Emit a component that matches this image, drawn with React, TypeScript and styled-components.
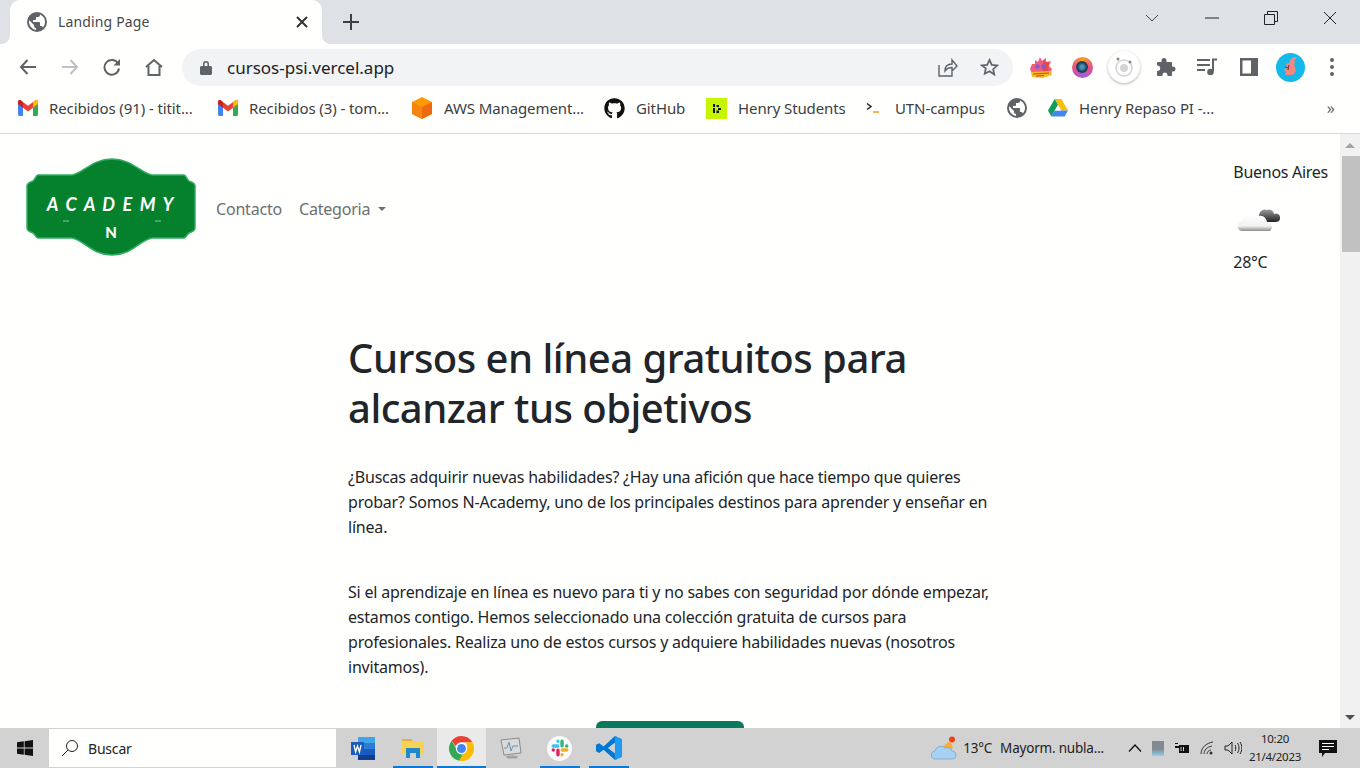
import { ReactNode } from "react";
import styled, { createGlobalStyle } from "styled-components";
import { FaGithub } from "react-icons/fa";

const GlobalStyle = createGlobalStyle`
  html, body {
    margin: 0;
    padding: 0;
    height: 100%;
    overflow: hidden;
  }
  body {
    font-family: "Noto Sans", "Open Sans", sans-serif;
    color: #212529;
  }
  * {
    box-sizing: border-box;
  }
`;

const GlobeIcon = ({ size = 20 }: { size?: number }) => (
  <svg width={size} height={size} viewBox="2 2 20 20">
    <path
      fill="#5f6368"
      fillRule="evenodd"
      d="M12 2a10 10 0 1 0 0 20 10 10 0 0 0 0-20zm-1 17.900A8 8 0 0 1 4.200 10.200L9 15v1c0 1.100.9 2 2 2zm6.900-2.500A2 2 0 0 0 16 16h-1v-3c0-.6-.4-1-1-1H8v-2h2c.6 0 1-.4 1-1V7h2c1.100 0 2-.9 2-2v-.4a8 8 0 0 1 2.900 12.800z"
    />
  </svg>
);

const GmailIcon = () => (
  <svg width="20" height="16" viewBox="0 0 20 16">
    <path fill="#4285f4" d="M0 3v11.500C0 15.300.7 16 1.500 16H5V7z" />
    <path fill="#34a853" d="M15 7v9h3.500c.8 0 1.500-.7 1.500-1.500V3z" />
    <path fill="#ea4335" d="M0 1.800V4l5 3.800 5 3.700 5-3.700L20 4V1.800C20 .3 18.300-.5 17.100.4L10 5.700 2.900.4C1.700-.5 0 .3 0 1.800z" />
    <path fill="#c5221f" d="M0 4l5 3.800V2.200L2.900.4C1.700-.5 0 .3 0 1.800z" />
    <path fill="#fbbc04" d="M15 2.200v5.600L20 4V1.800C20 .3 18.300-.5 17.100.4z" />
  </svg>
);

const AwsCube = () => (
  <svg width="22" height="22" viewBox="0 0 22 22">
    <path fill="#ff9900" d="M11 0l10 5v12l-10 5-10-5V5z" />
    <path fill="#f58410" d="M11 10L1 5v12l10 5z" />
    <path fill="#ee6a12" d="M11 10l10-5v12l-10 5z" />
  </svg>
);

const HenryIcon = () => (
  <HenrySquare>
    <svg width="8" height="9" viewBox="0 0 8 9">
      <path fill="#111" d="M0 0h2v3H0zM0 4h2v5H0zM3.500 1H6v2H3.500zM5 4h3v2H5zM3.500 6.500H6V9H3.500z" />
    </svg>
  </HenrySquare>
);

const TerminalIcon = () => (
  <svg width="18" height="12" viewBox="0 0 18 12">
    <path fill="none" stroke="#222" strokeWidth="1.500" d="M1 1.500L5 4.500 1 7.500" />
    <path fill="none" stroke="#f09a1a" strokeWidth="1.500" d="M7 10h6" />
  </svg>
);

const DriveIcon = () => (
  <svg width="20" height="18" viewBox="0 0 20 18">
    <path fill="#fbbc04" d="M6.700 0h6.600L20 11.600h-6.700z" />
    <path fill="#0f9d58" d="M6.700 0L10 5.800 3.300 17.400 0 11.600z" />
    <path fill="#4285f4" d="M6.700 11.600H20l-3.300 5.800H3.300z" />
    <path fill="#fffffd" d="M10 6.200l2.700 5.400H7.200z" />
  </svg>
);

const ChromeIcon = () => (
  <svg width="25" height="25" viewBox="0 0 24 24">
    <path fill="#ea4335" d="M12 0a12 12 0 0 1 10.400 6H12a6 6 0 0 0-5.600 3.800L2.600 4.500A12 12 0 0 1 12 0z" />
    <path fill="#34a853" d="M2.600 4.500l5.200 9.200a5 5 0 0 0 5.700 4.100L9.800 23.800A12 12 0 0 1 2.600 4.500z" />
    <path fill="#fbbc04" d="M22.400 6a12 12 0 0 1-12.600 17.800l5.200-9A6 6 0 0 0 16 6z" />
    <circle cx="12" cy="12" r="5.400" fill="#fff" />
    <circle cx="12" cy="12" r="4.300" fill="#4285f4" />
  </svg>
);

const WordIcon = () => (
  <svg width="25" height="25" viewBox="0 0 25 25">
    <path fill="#41a5ee" d="M7 1h17v6H7z" />
    <path fill="#2b7cd3" d="M7 7h17v6H7z" />
    <path fill="#185abd" d="M7 13h17v6H7z" />
    <path fill="#103f91" d="M7 19h17v5H7z" />
    <rect x="0" y="6" width="13" height="13" fill="#1a5dbd" />
    <path fill="none" stroke="#fff" strokeWidth="1.300" d="M3 9l1.600 7 1.900-6 1.900 6L10 9" />
  </svg>
);

const FolderIcon = () => (
  <svg width="24" height="22" viewBox="0 0 24 22">
    <path fill="#e2b33f" d="M1 2h9l2 2h-11z" />
    <path fill="#f8d254" d="M1 4h22v13H1z" />
    <path fill="#1f8ac9" d="M5 11h14v10h-4v-5H9v5H5z" />
  </svg>
);

const MonitorIcon = () => (
  <svg width="24" height="24" viewBox="0 0 24 24">
    <path fill="#d9dadb" stroke="#8c8c8c" d="M2 4l18-2 2 15-17 2z" />
    <path fill="none" stroke="#6b93b5" d="M5 12l3 0 2-6 2 9 2-5 5 0" />
    <ellipse cx="13" cy="21" rx="6" ry="1.600" fill="#a2a2a2" />
  </svg>
);

const SlackIcon = () => (
  <SlackDisc>
    <svg width="18" height="18" viewBox="0 0 16 16">
      <path fill="none" stroke="#36c5f0" strokeWidth="3" strokeLinecap="round" d="M2 6.200h4M6.200 2v.1" />
      <path fill="none" stroke="#2eb67d" strokeWidth="3" strokeLinecap="round" d="M9.800 2v4M14 6.200h-.1" />
      <path fill="none" stroke="#ecb22e" strokeWidth="3" strokeLinecap="round" d="M14 9.800h-4M9.800 14v-.1" />
      <path fill="none" stroke="#e01e5a" strokeWidth="3" strokeLinecap="round" d="M6.200 14v-4M2 9.800h.1" />
    </svg>
  </SlackDisc>
);

const VsCodeIcon = () => (
  <svg width="26" height="26" viewBox="0 0 24 24">
    <path fill="#0078d4" d="M17.500 1L24 4v16l-6.500 3L7 13.500l-4 3-3-1.500v-6L3 7.500l4 3zM17.500 7L11 12l6.500 5z" />
    <path fill="#1f9cf0" d="M17.500 1L24 4v16l-6.500 3z" />
  </svg>
);

const WindowsIcon = () => (
  <svg width="16" height="16" viewBox="0 0 16 16">
    <path fill="#111" d="M0 2.300l6.800-1v6.300H0zM7.600 1.200L16 0v7.600H7.600zM0 8.400h6.800v6.300l-6.800-1zM7.600 8.400H16V16l-8.400-1.200z" />
  </svg>
);

const WeatherCloud = () => (
  <svg width="44" height="30" viewBox="0 0 44 30">
    <defs>
      <linearGradient id="lightCloud" x1="0" y1="0" x2="0" y2="1">
        <stop offset="0" stopColor="#ffffff" />
        <stop offset=".7" stopColor="#f2f2f2" />
        <stop offset="1" stopColor="#8d8d8d" />
      </linearGradient>
      <linearGradient id="darkCloud" x1="0" y1="0" x2="0" y2="1">
        <stop offset="0" stopColor="#9a9a9a" />
        <stop offset="1" stopColor="#222" />
      </linearGradient>
    </defs>
    <path fill="url(#darkCloud)" d="M21 10a6 6 0 0 1 8-5 5 5 0 0 1 7 4 4 4 0 0 1 6 4c0 3-2 4-5 4H24c-3 0-5-3-3-7z" />
    <path fill="url(#lightCloud)" d="M5 26a5 5 0 0 1-1-10 8 8 0 0 1 14-4 7 7 0 0 1 11 5 5 5 0 0 1 3 9z" />
  </svg>
);

const TaskbarWeatherIcon = () => (
  <svg width="26" height="24" viewBox="0 0 26 24">
    <circle cx="21" cy="3.500" r="3" fill="#f0420f" />
    <path fill="#f6ad3c" d="M10 12l9-7 3 6-2 3z" />
    <path fill="#a9d0ee" stroke="#7fb2dc" d="M5 23a4 4 0 0 1-1-8 6 6 0 0 1 10-3 5 5 0 0 1 7 3 4 4 0 0 1 0 8z" />
  </svg>
);

const Logo = () => (
  <LogoSvg width="170" height="98" viewBox="0 0 170 98">
    <path
      fill="#05812e"
      stroke="#2fae63"
      strokeWidth="1.500"
      d="M46 17C58 15 66 1 86 1s28 14 40 16h32c2 0 3 5 5 6 3 1 6 2 6 5v42c0 3-3 4-6 5-2 1-3 5-5 5h-32c-12 2-20 17-40 17s-28-15-40-17H12c-2 0-3-4-5-5-3-1-6-2-6-5V28c0-3 3-4 6-5 2-1 3-6 5-6z"
    />
    <path fill="none" stroke="#7fcf9c" strokeWidth="1" d="M37 63h6M129 63h6" />
    <LogoWord x="85" y="53" textAnchor="middle">A C A D E M Y</LogoWord>
    <LogoLetter x="85" y="80" textAnchor="middle">N</LogoLetter>
  </LogoSvg>
);

interface BookmarkData {
  icon: ReactNode;
  label?: string;
  width: number;
}

const bookmarks: BookmarkData[] = [
  { icon: <GmailIcon />, label: "Recibidos (91) - titit...", width: 148 },
  { icon: <GmailIcon />, label: "Recibidos (3) - tom...", width: 141 },
  { icon: <AwsCube />, label: "AWS Management...", width: 139 },
  { icon: <FaGithub size={21} color="#111" />, label: "GitHub", width: 49 },
  { icon: <HenryIcon />, label: "Henry Students", width: 107 },
  { icon: <TerminalIcon />, label: "UTN-campus", width: 91 },
  { icon: <GlobeIcon />, width: 0 },
  { icon: <DriveIcon />, label: "Henry Repaso PI -...", width: 136 },
];

const App = () => {
  return (
    <>
      <GlobalStyle />
      <Screen>
        <TabStrip>
          <Tab>
            <GlobeIcon />
            <TabTitle>Landing Page</TabTitle>
            <svg width="12" height="12" viewBox="0 0 12 12">
              <path stroke="#333" strokeWidth="2" d="M1 1l10 10M11 1L1 11" />
            </svg>
          </Tab>
          <NewTab>
            <svg width="16" height="16" viewBox="0 0 16 16">
              <path stroke="#3c4043" strokeWidth="2" d="M8 0v16M0 8h16" />
            </svg>
          </NewTab>
          <WindowButtons>
            <WindowButton $width={60}>
              <svg width="14" height="8" viewBox="0 0 14 8">
                <path fill="none" stroke="#444" d="M1 1l6 6 6-6" />
              </svg>
            </WindowButton>
            <WindowButton $width={60}>
              <svg width="14" height="2" viewBox="0 0 14 2">
                <path stroke="#222" d="M0 1h14" />
              </svg>
            </WindowButton>
            <WindowButton $width={58}>
              <svg width="14" height="14" viewBox="0 0 14 14">
                <path fill="none" stroke="#222" d="M.5 3.500h10v10H.5zM3.500 3.500V.5h10v10h-3" />
              </svg>
            </WindowButton>
            <WindowButton $width={60}>
              <svg width="14" height="14" viewBox="0 0 14 14">
                <path stroke="#222" d="M1 1l12 12M13 1L1 13" />
              </svg>
            </WindowButton>
          </WindowButtons>
        </TabStrip>

        <Toolbar>
          <NavButtons>
            <svg width="18" height="16" viewBox="0 0 18 16">
              <path fill="none" stroke="#5f6368" strokeWidth="2" d="M17 8H2M8.500 1L2 8l6.500 7" />
            </svg>
            <svg width="18" height="16" viewBox="0 0 18 16">
              <path fill="none" stroke="#bdc1c6" strokeWidth="2" d="M1 8h15M9.500 1L16 8l-6.500 7" />
            </svg>
            <svg width="18" height="18" viewBox="0 0 18 18">
              <path fill="none" stroke="#5f6368" strokeWidth="2" d="M15.300 6A7.300 7.300 0 1 0 16 10.500" />
              <path fill="#5f6368" d="M17 1v6.500h-6.500z" />
            </svg>
            <svg width="18" height="18" viewBox="0 0 18 18">
              <path fill="none" stroke="#5f6368" strokeWidth="2" d="M1 9l8-7 8 7M3.500 8v9h11V8" />
            </svg>
          </NavButtons>
          <Omnibox>
            <svg width="12" height="15" viewBox="0 0 12 15">
              <path fill="#5f6368" d="M1.500 6H3V4a3 3 0 0 1 6 0v2h1.500c.8 0 1.500.7 1.500 1.500v6c0 .8-.7 1.500-1.500 1.500h-9C.7 15 0 14.300 0 13.500v-6C0 6.700.7 6 1.500 6zM4.500 6h3V4a1.500 1.500 0 0 0-3 0z" />
            </svg>
            <Url>cursos-psi.vercel.app</Url>
            <OmniboxActions>
              <svg width="20" height="19" viewBox="0 0 20 19">
                <path fill="none" stroke="#5f6368" strokeWidth="1.400" d="M1 7v11h13v-4M7 13c0-5 3-7 7-7V2l5 6-5 5V9.500c-3 0-5 1-7 3.500z" />
              </svg>
              <svg width="19" height="18" viewBox="0 0 24 23">
                <path fill="none" stroke="#5f6368" strokeWidth="2.200" d="M12 2.500l2.900 6.300 6.900.8-5.100 4.700 1.400 6.800L12 17l-6.100 3.100 1.400-6.800L2.200 9.600l6.900-.8z" />
              </svg>
            </OmniboxActions>
          </Omnibox>
          <Extensions>
            <ExtensionSlot>
              <svg width="24" height="24" viewBox="0 0 24 24">
                <path fill="#ef5a7e" d="M3 9l3 0 0-4 3 2 2-5 2 4 4-3 0 4 5-1-2 5 3 3-2 4H3l-2-4z" />
                <path fill="#e8431f" d="M14 5l6 3-1 8h-5z" opacity=".7" />
                <circle cx="8.500" cy="11.500" r="2.200" fill="#7a5fd6" />
                <circle cx="14.500" cy="11.500" r="2.200" fill="#7a5fd6" />
                <path fill="#f5bd23" d="M2 17l20-1 1 4-9 3-11-1z" />
                <path stroke="#e6342a" strokeWidth="1" d="M4 19l16-1M7 21l8-.5" />
              </svg>
            </ExtensionSlot>
            <ExtensionSlot>
              <LensRing>
                <LensCore />
              </LensRing>
            </ExtensionSlot>
            <ExtensionSlot>
              <RadarDisc>
                <svg width="24" height="24" viewBox="0 0 24 24">
                  <circle cx="12" cy="13" r="8" fill="none" stroke="#d4d4d4" strokeWidth="1.500" />
                  <circle cx="12" cy="13" r="4" fill="#d4d4d4" />
                  <circle cx="6" cy="4" r="1.500" fill="#888" />
                  <circle cx="18" cy="7" r="1.500" fill="#888" />
                </svg>
              </RadarDisc>
            </ExtensionSlot>
            <ExtensionSlot>
              <svg width="20" height="20" viewBox="0 0 20 20">
                <path fill="#5f6368" d="M8 1a2.500 2.500 0 0 1 2.500 2.500V5H15a1 1 0 0 1 1 1v3.500h1a2.500 2.500 0 0 1 0 5h-1V18a1 1 0 0 1-1 1h-3.500v-1a2.500 2.500 0 0 0-5 0v1H2a1 1 0 0 1-1-1v-4h1a2.800 2.800 0 0 0 0-5.500H1V6a1 1 0 0 1 1-1h3.500V3.500A2.500 2.500 0 0 1 8 1z" />
              </svg>
            </ExtensionSlot>
            <ExtensionSlot>
              <svg width="20" height="18" viewBox="0 0 20 18">
                <path stroke="#5f6368" strokeWidth="2" fill="none" d="M0 2h13M0 7h13M0 12h8M16 13V1.500h4" />
                <circle cx="13.500" cy="14" r="3.300" fill="#5f6368" />
              </svg>
            </ExtensionSlot>
            <ExtensionSlot>
              <svg width="18" height="18" viewBox="0 0 18 18">
                <path fill="#5f6368" d="M0 0h18v18H0zM2.500 2.500v13H11v-13z" fillRule="evenodd" />
              </svg>
            </ExtensionSlot>
            <ExtensionSlot>
              <Avatar>
                <svg width="16" height="22" viewBox="0 0 16 22">
                  <path fill="#f08a80" d="M12 1l3 .5-3 3.500 1 2c-1 1-1 2 0 4 1.500 4 0 8-4 8H3l1-3-2-2 3-3-1-3 3-1 2-4z" />
                  <path stroke="#a82a2a" strokeWidth="1.200" d="M3 11l4 1M6 14l1-5" />
                </svg>
              </Avatar>
            </ExtensionSlot>
            <ExtensionSlot>
              <MenuDots>
                <i />
                <i />
                <i />
              </MenuDots>
            </ExtensionSlot>
          </Extensions>
        </Toolbar>

        <BookmarkBar>
          <BookmarkList>
            {bookmarks.map((bookmark, index) => (
              <Bookmark key={index}>
                {bookmark.icon}
                {bookmark.label && <BookmarkLabel $width={bookmark.width}>{bookmark.label}</BookmarkLabel>}
              </Bookmark>
            ))}
          </BookmarkList>
          <MoreBookmarks>»</MoreBookmarks>
        </BookmarkBar>

        <Viewport>
          <Page>
            <NavBar>
              <NavLeft>
                <Logo />
                <NavLink>Contacto</NavLink>
                <NavLink>
                  Categoria
                  <Caret />
                </NavLink>
              </NavLeft>
              <Weather>
                <City>Buenos Aires</City>
                <CloudSlot>
                  <WeatherCloud />
                </CloudSlot>
                <City>28°C</City>
              </Weather>
            </NavBar>
            <Hero>
              <Title>Cursos en línea gratuitos para alcanzar tus objetivos</Title>
              <Paragraph>
                ¿Buscas adquirir nuevas habilidades? ¿Hay una afición que hace tiempo que quieres probar? Somos
                N-Academy, uno de los principales destinos para aprender y enseñar en línea.
              </Paragraph>
              <Paragraph>
                Si el aprendizaje en línea es nuevo para ti y no sabes con seguridad por dónde empezar, estamos
                contigo. Hemos seleccionado una colección gratuita de cursos para profesionales. Realiza uno de estos
                cursos y adquiere habilidades nuevas (nosotros invitamos).
              </Paragraph>
              <CtaRow>
                <Cta />
              </CtaRow>
            </Hero>
          </Page>
          <Scrollbar>
            <ScrollArrow $up />
            <ScrollThumb />
            <ScrollTrack />
            <ScrollArrow />
          </Scrollbar>
        </Viewport>

        <Taskbar>
          <StartButton>
            <WindowsIcon />
          </StartButton>
          <SearchBox>
            <svg width="18" height="18" viewBox="0 0 18 18">
              <circle cx="11" cy="7" r="5.500" fill="none" stroke="#222" />
              <path stroke="#222" d="M7 11l-6 6" />
            </svg>
            <SearchText>Buscar</SearchText>
          </SearchBox>
          <TaskIcons>
            <TaskIcon>
              <WordIcon />
            </TaskIcon>
            <TaskIcon $open>
              <FolderIcon />
            </TaskIcon>
            <TaskIcon $open $active>
              <ChromeIcon />
            </TaskIcon>
            <TaskIcon>
              <MonitorIcon />
            </TaskIcon>
            <TaskIcon $open>
              <SlackIcon />
            </TaskIcon>
            <TaskIcon $open>
              <VsCodeIcon />
            </TaskIcon>
          </TaskIcons>
          <Tray>
            <TaskbarWeatherIcon />
            <TrayWeather>13°C</TrayWeather>
            <TrayForecast>Mayorm. nubla...</TrayForecast>
            <TrayIcons>
              <svg width="14" height="8" viewBox="0 0 14 8">
                <path fill="none" stroke="#111" strokeWidth="1.300" d="M1 7.500l6-6.500 6 6.500" />
              </svg>
              <TrayApp />
              <svg width="16" height="12" viewBox="0 0 16 12">
                <path fill="#111" d="M5 3h10v8H5zM1 1h3v1H1zM1 4h4v2H1z" />
                <path stroke="#d2d2d2" d="M7 5v4M9.500 5v4" />
              </svg>
              <svg width="14" height="14" viewBox="0 0 14 14">
                <path fill="none" stroke="#333" d="M1 13C1 7 6 2 13 1M4 13c0-4 3-7 8-8M7 13c0-2 2-4 4-4" />
                <circle cx="11" cy="12" r="1.500" fill="#333" />
              </svg>
              <svg width="18" height="14" viewBox="0 0 18 14">
                <path fill="none" stroke="#222" d="M1 5h3l4-4v12l-4-4H1zM11 4c1 2 1 4 0 6M13.500 2c2 3 2 7 0 10M16 1c2.500 4 2.500 8 0 12" />
              </svg>
            </TrayIcons>
            <Clock>
              <span>10:20</span>
              <span>21/4/2023</span>
            </Clock>
            <Notifications>
              <svg width="18" height="17" viewBox="0 0 18 17">
                <path fill="#111" d="M0 0h18v13H6l-3 4v-4H0z" />
                <path stroke="#fff" d="M3 3.500h12M3 6.500h12M3 9.500h7" />
              </svg>
            </Notifications>
          </Tray>
        </Taskbar>
      </Screen>
    </>
  );
};

export default App;

const Screen = styled.div`
  display: flex;
  flex-direction: column;
  width: 1360px;
  height: 768px;
  overflow: hidden;
  background: #fffffd;
`;

const TabStrip = styled.div`
  display: flex;
  align-items: flex-end;
  flex: 0 0 44px;
  padding-left: 10px;
  background: #dee1e6;
`;

const Tab = styled.div`
  position: relative;
  display: flex;
  align-items: center;
  width: 312px;
  height: 44px;
  padding: 0 14px 0 17px;
  background: #fffffd;
  border-radius: 10px 10px 0 0;
  svg:last-child {
    margin-left: auto;
  }
  &::before,
  &::after {
    content: "";
    position: absolute;
    bottom: 0;
    width: 8px;
    height: 8px;
  }
  &::before {
    left: -8px;
    background: radial-gradient(circle at 0 0, #dee1e6 7.500px, #fffffd 8px);
  }
  &::after {
    right: -8px;
    background: radial-gradient(circle at 100% 0, #dee1e6 7.500px, #fffffd 8px);
  }
`;

const TabTitle = styled.span`
  margin: -2px 0 0 11px;
  font-size: 14px;
  letter-spacing: 0.15px;
  color: #45484c;
`;

const NewTab = styled.div`
  display: flex;
  align-items: center;
  height: 44px;
  margin-left: 21px;
`;

const WindowButtons = styled.div`
  display: flex;
  align-self: flex-start;
  height: 36px;
  margin-left: auto;
`;

const WindowButton = styled.div<{ $width: number }>`
  display: flex;
  align-items: center;
  justify-content: center;
  width: ${({ $width }) => $width}px;
`;

const Toolbar = styled.div`
  display: flex;
  align-items: center;
  flex: 0 0 46px;
  padding-left: 19px;
  background: #fffffd;
`;

const NavButtons = styled.div`
  display: flex;
  align-items: center;
  gap: 24px;
  width: 163px;
`;

const Omnibox = styled.div`
  display: flex;
  align-items: center;
  width: 831px;
  height: 37px;
  padding: 0 14px 0 18px;
  background: #f1f3f4;
  border-radius: 19px;
`;

const Url = styled.span`
  margin-left: 15px;
  font-size: 17px;
  color: #202124;
`;

const OmniboxActions = styled.div`
  display: flex;
  align-items: center;
  gap: 22px;
  margin-left: auto;
`;

const Extensions = styled.div`
  display: flex;
  align-items: center;
  margin-left: 7px;
`;

const ExtensionSlot = styled.div`
  display: flex;
  align-items: center;
  justify-content: center;
  width: 41.600px;
  height: 40px;
`;

const LensRing = styled.div`
  display: flex;
  align-items: center;
  justify-content: center;
  width: 21px;
  height: 21px;
  border-radius: 50%;
  background: conic-gradient(#f5a02c, #e94d8b, #a05fd6, #e94d8b, #f5a02c);
`;

const LensCore = styled.div`
  width: 12px;
  height: 12px;
  border-radius: 50%;
  background: radial-gradient(circle, #4a90b8 20%, #1f3f57 55%);
`;

const RadarDisc = styled.div`
  display: flex;
  align-items: center;
  justify-content: center;
  width: 32px;
  height: 32px;
  border-radius: 50%;
  background: #fff;
  box-shadow: 0 1px 3px rgba(0, 0, 0, 0.3);
`;

const Avatar = styled.div`
  display: flex;
  align-items: center;
  justify-content: center;
  width: 29px;
  height: 29px;
  border-radius: 50%;
  background: #14b9ea;
`;

const MenuDots = styled.div`
  display: flex;
  flex-direction: column;
  gap: 3px;
  i {
    display: block;
    width: 4px;
    height: 4px;
    border-radius: 50%;
    background: #5f6368;
  }
`;

const BookmarkBar = styled.div`
  display: flex;
  align-items: center;
  flex: 0 0 44px;
  padding: 0 25px 7px 18px;
  background: #fffffd;
  border-bottom: 1px solid #d6d8d9;
`;

const BookmarkList = styled.div`
  display: flex;
  align-items: center;
  gap: 21px;
`;

const Bookmark = styled.div`
  display: flex;
  align-items: center;
  gap: 11px;
`;

const BookmarkLabel = styled.span<{ $width: number }>`
  width: ${({ $width }) => $width}px;
  font-size: 15px;
  letter-spacing: -0.1px;
  white-space: nowrap;
  color: #3c4043;
`;

const HenrySquare = styled.div`
  display: flex;
  align-items: center;
  justify-content: center;
  width: 21px;
  height: 21px;
  background: #c6f500;
`;

const MoreBookmarks = styled.span`
  margin-left: auto;
  font-size: 16px;
  color: #5f6368;
`;

const Viewport = styled.div`
  display: flex;
  flex: 1;
  min-height: 0;
`;

const Page = styled.div`
  flex: 1;
  min-width: 0;
  overflow: hidden;
  background: #fffffd;
`;

const NavBar = styled.nav`
  display: flex;
  align-items: flex-start;
  justify-content: space-between;
  padding: 24px 12px 0 26px;
`;

const NavLeft = styled.div`
  display: flex;
  align-items: center;
  gap: 17px;
`;

const LogoSvg = styled.svg`
  margin-right: 3px;
`;

const LogoWord = styled.text`
  font-family: "Lato", sans-serif;
  font-size: 18px;
  font-style: italic;
  font-weight: 700;
  letter-spacing: 1.800px;
  fill: #fff;
`;

const LogoLetter = styled.text`
  font-family: "Lato", sans-serif;
  font-size: 15px;
  font-weight: 900;
  fill: #fff;
`;

const NavLink = styled.a`
  display: flex;
  align-items: center;
  padding-top: 4px;
  font-size: 16px;
  letter-spacing: -0.2px;
  color: #6c6f71;
`;

const Caret = styled.span`
  width: 0;
  height: 0;
  margin-left: 8px;
  border-top: 4.800px solid #6c6f71;
  border-left: 4.800px solid transparent;
  border-right: 4.800px solid transparent;
`;

const Weather = styled.div`
  display: flex;
  flex-direction: column;
  align-items: flex-start;
  gap: 18px;
  margin-top: 2px;
`;

const CloudSlot = styled.div`
  display: flex;
  margin: 3px 0 -3px 5px;
`;

const City = styled.span`
  font-size: 16px;
  letter-spacing: -0.28px;
  line-height: 24px;
  color: #212529;
`;

const Hero = styled.main`
  width: 660px;
  margin: 59px 0 0 348px;
`;

const Title = styled.h1`
  margin: 0 0 32px;
  font-size: 40px;
  font-weight: 500;
  line-height: 50px;
  letter-spacing: -0.5px;
  color: #212529;
`;

const Paragraph = styled.p`
  margin: 0 0 40px;
  font-size: 16px;
  line-height: 25px;
  letter-spacing: -0.2px;
  color: #212529;
`;

const CtaRow = styled.div`
  display: flex;
  justify-content: center;
  width: 644px;
  margin-top: 41px;
`;

const Cta = styled.div`
  width: 148px;
  height: 38px;
  background: #0b7a5c;
  border-radius: 6px;
`;

const Scrollbar = styled.div`
  display: flex;
  flex-direction: column;
  align-items: flex-end;
  flex: 0 0 20px;
  background: #f1f1f1;
`;

const ScrollArrow = styled.div<{ $up?: boolean }>`
  display: flex;
  align-items: center;
  justify-content: center;
  flex: 0 0 22px;
  width: 100%;
  &::after {
    content: "";
    border-left: 5px solid transparent;
    border-right: 5px solid transparent;
    border-top: ${({ $up }) => ($up ? "0" : "5px solid #505050")};
    border-bottom: ${({ $up }) => ($up ? "5px solid #a3a3a3" : "0")};
  }
`;

const ScrollThumb = styled.div`
  flex: 0 0 96px;
  width: 18px;
  background: #c1c1c1;
`;

const ScrollTrack = styled.div`
  flex: 1;
`;

const Taskbar = styled.footer`
  display: flex;
  align-items: center;
  flex: 0 0 40px;
  background: #d2d2d2;
`;

const StartButton = styled.div`
  display: flex;
  align-items: center;
  justify-content: center;
  width: 49px;
`;

const SearchBox = styled.div`
  display: flex;
  align-items: center;
  width: 287px;
  height: 38px;
  padding-left: 12px;
  background: #fffffd;
`;

const SearchText = styled.span`
  margin-left: 9px;
  font-size: 14px;
  letter-spacing: -0.2px;
  color: #222;
`;

const TaskIcons = styled.div`
  display: flex;
  margin-left: 3px;
`;

const TaskIcon = styled.div<{ $open?: boolean; $active?: boolean }>`
  position: relative;
  display: flex;
  align-items: center;
  justify-content: center;
  width: 49px;
  height: 40px;
  background: ${({ $active }) => ($active ? "#eaeaea" : "transparent")};
  &::after {
    content: "";
    position: absolute;
    left: ${({ $active }) => ($active ? "0" : "5px")};
    right: ${({ $active }) => ($active ? "0" : "4px")};
    bottom: 0;
    height: 2px;
    background: ${({ $open }) => ($open ? "#0f78d4" : "transparent")};
  }
`;

const SlackDisc = styled.div`
  display: flex;
  align-items: center;
  justify-content: center;
  width: 25px;
  height: 25px;
  border-radius: 50%;
  background: #fafafa;
`;

const Tray = styled.div`
  display: flex;
  align-items: center;
  margin-left: auto;
  padding-right: 10px;
`;

const TrayWeather = styled.span`
  margin-left: 6px;
  font-size: 13.500px;
  letter-spacing: -0.2px;
  color: #222;
`;

const TrayForecast = styled.span`
  margin-left: 8px;
  font-size: 13.500px;
  letter-spacing: -0.2px;
  color: #222;
`;

const TrayIcons = styled.div`
  display: flex;
  align-items: center;
  gap: 10px;
  margin-left: 24px;
`;

const TrayApp = styled.div`
  width: 12px;
  height: 15px;
  background: linear-gradient(#808a90 55%, #8fd3ef);
`;

const Clock = styled.div`
  display: flex;
  flex-direction: column;
  align-items: center;
  width: 62px;
  margin-left: 2px;
  font-size: 11.500px;
  letter-spacing: -0.3px;
  line-height: 18px;
  color: #222;
`;

const Notifications = styled.div`
  display: flex;
  justify-content: center;
  width: 44px;
`;
